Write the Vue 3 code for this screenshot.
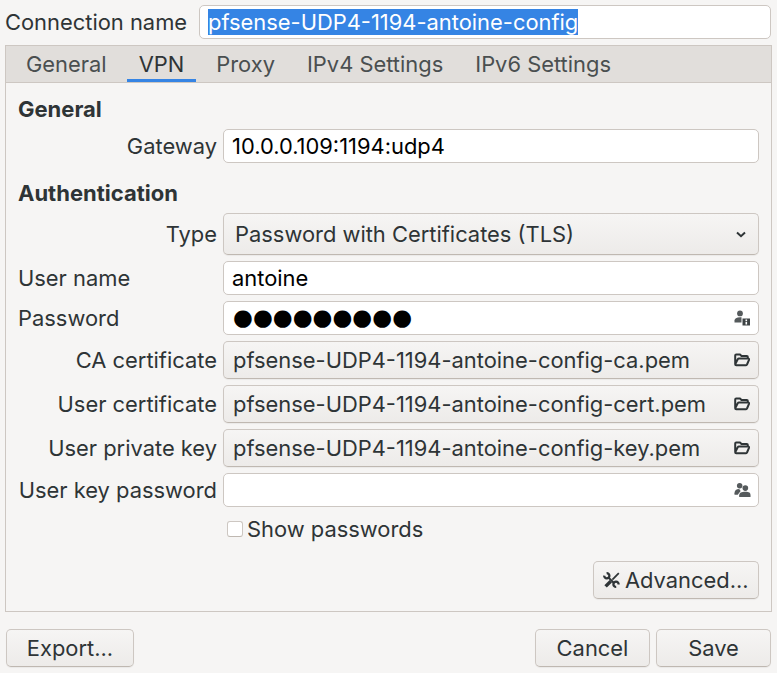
<script setup>
const tabs = [
  { name: 'General' },
  { name: 'VPN', active: true },
  { name: 'Proxy' },
  { name: 'IPv4 Settings' },
  { name: 'IPv6 Settings' },
]
const files = [
  { label: 'CA certificate', file: 'pfsense-UDP4-1194-antoine-config-ca.pem' },
  { label: 'User certificate', file: 'pfsense-UDP4-1194-antoine-config-cert.pem' },
  { label: 'User private key', file: 'pfsense-UDP4-1194-antoine-config-key.pem' },
]
</script>

<template>
  <div class="dialog">
    <div class="name-row">
      <label class="name-label">Connection name</label>
      <div class="entry name-entry"><span class="selected">pfsense-UDP4-1194-antoine-config</span></div>
    </div>

    <div class="notebook">
      <div class="tabs">
        <div v-for="t in tabs" :key="t.name" class="tab" :class="{ active: t.active }">{{ t.name }}</div>
      </div>
      <div class="page">
        <h3 class="heading first">General</h3>
        <div class="row gateway">
          <label class="label">Gateway</label>
          <div class="entry">10.0.0.109:1194:udp4</div>
        </div>

        <h3 class="heading second">Authentication</h3>
        <div class="rows">
          <div class="row">
            <label class="label">Type</label>
            <div class="button combo">
              <span>Password with Certificates (TLS)</span>
              <svg width="16" height="16" viewBox="0 0 16 16" class="chev"><path d="M4 6.5 8 10.2 12 6.5" fill="none" stroke="#2e3436" stroke-width="2"/></svg>
            </div>
          </div>
          <div class="row">
            <label class="label left">User name</label>
            <div class="entry">antoine</div>
          </div>
          <div class="row">
            <label class="label left">Password</label>
            <div class="entry icon-entry">
              <span class="dots">●●●●●●●●●</span>
              <svg width="16" height="16" viewBox="0 0 16 16">
                <circle cx="6" cy="3.4" r="2.9" fill="#555a5c"/>
                <path d="M0.5 12.5V10.5C0.5 8.5 2.5 7.2 6 7.2H7.5V12.5Z" fill="#555a5c"/>
                <path d="M8.5 8.5H16V15.5H8.5Z" fill="#3d4244"/>
                <path d="M11.5 9.6h1.6v1.4h-1.6ZM11.5 11.8h1.6v2.8h-1.6Z" fill="#fff"/>
              </svg>
            </div>
          </div>
          <div v-for="f in files" :key="f.label" class="row">
            <label class="label">{{ f.label }}</label>
            <div class="button file">
              <span>{{ f.file }}</span>
              <svg width="16" height="16" viewBox="0 0 16 16">
                <path d="M1.2 12.3V3.5C1.2 2.9 1.6 2.5 2.2 2.5H6L7.5 4H12.8C13.4 4 13.8 4.4 13.8 5V6.4M1.2 12.3C1.2 12.9 1.7 13.3 2.2 13.3H11.8C12.4 13.3 12.7 13 13 12.5L15 7.8C15.2 7 14.8 6.5 14 6.5H5C4.4 6.5 4 6.8 3.7 7.3Z" fill="none" stroke="#2e3436" stroke-width="2" stroke-linejoin="round"/>
              </svg>
            </div>
          </div>
          <div class="row">
            <label class="label">User key password</label>
            <div class="entry icon-entry">
              <span></span>
              <svg class="people" width="17" height="16" viewBox="0 0 18 16">
                <circle cx="6" cy="3.5" r="2.9" fill="#555a5c"/>
                <path d="M0.5 11.5C0.5 8.5 2.5 7 5.5 7 L7 9 4 13H0.5Z" fill="#555a5c"/>
                <circle cx="12" cy="6" r="3" fill="#555a5c"/>
                <path d="M5.5 15.5V13.5C5.5 11 8 9.8 12 9.8S17.5 11 17.5 13.5V15.5Z" fill="#555a5c"/>
              </svg>
            </div>
          </div>
        </div>

        <div class="check-row">
          <span class="check"></span>
          <span>Show passwords</span>
        </div>

        <div class="advanced-row">
          <div class="button advanced">
            <svg width="17" height="17" viewBox="0 0 17 17" fill="none" stroke="#2e3436">
              <path d="M5.6 5.6 11.2 11.2" stroke-width="2"/>
              <path d="M1.2 3.6A2.6 2.6 0 1 0 3.6 1.2" stroke-width="2.3"/>
              <path d="M13.2 14.9A2.6 2.6 0 1 1 15.6 12.5" stroke-width="2.3"/>
              <path d="M15.8 1.2 9.4 7.6" stroke-width="1.8"/>
              <path d="M7.8 9.2 2.6 14.4" stroke-width="3.4"/>
            </svg>
            <span>Advanced...</span>
          </div>
        </div>
      </div>
    </div>

    <div class="actions">
      <div class="button action export">Export...</div>
      <div class="spacer"></div>
      <div class="button action cancel">Cancel</div>
      <div class="button action save">Save</div>
    </div>
  </div>
</template>

<style>
html, body { margin: 0; background: #f6f5f4; }
</style>

<style scoped>
.dialog {
  width: 777px;
  height: 673px;
  box-sizing: border-box;
  padding: 5px 6px 6px 5px;
  background: #f6f5f4;
  color: #2e3436;
  font-family: Inter, "Noto Sans", sans-serif;
  font-size: 21.9px;
  display: flex;
  flex-direction: column;
  overflow: hidden;
}
.name-row {
  display: flex;
  align-items: center;
  height: 34px;
  gap: 12px;
}
.name-label { width: 182px; flex: none; white-space: nowrap; }
.name-entry { flex: 1; }
.selected { background: #3584e4; color: #fff; display: inline-block; line-height: 26px; }
.entry {
  height: 34px;
  box-sizing: border-box;
  flex: 1;
  min-width: 0;
  background: #fff;
  border: 1px solid #cdc7c2;
  border-radius: 5px;
  padding: 0 8px;
  display: flex;
  align-items: center;
  color: #000;
  white-space: nowrap;
}
.notebook {
  margin-top: 6px;
  margin-right: -1px;
  height: 567px;
  box-sizing: border-box;
  border: 1px solid #cdc7c2;
  display: flex;
  flex-direction: column;
}
.tabs {
  height: 37px;
  box-sizing: border-box;
  flex: none;
  background: #e1dedb;
  border-bottom: 1px solid #cdc7c2;
  display: flex;
  padding-left: 4px;
}
.tab {
  padding: 0 16px;
  line-height: 36px;
  color: #4a4f50;
}
.tab.active { padding: 0 12px; margin: 0 4px; color: #2e3436; box-shadow: inset 0 -3px 0 #3584e4; height: 36px; }
.page {
  flex: 1;
  padding: 0 12px;
  display: flex;
  flex-direction: column;
}
.heading {
  margin: 0;
  font-size: 22px;
  font-weight: 700;
  line-height: 26px;
}
.heading.first { margin-top: 13px; }
.heading.second { margin-top: 17px; }
.gateway { margin-top: 7px; }
.rows {
  margin-top: 7px;
  display: flex;
  flex-direction: column;
  gap: 6px;
}
.row {
  display: flex;
  align-items: center;
  gap: 6px;
}
.label {
  width: 199px;
  flex: none;
  text-align: right;
  white-space: nowrap;
}
.label.left { text-align: left; }
.button {
  box-sizing: border-box;
  border: 1px solid #cdc7c2;
  border-bottom-color: #bfb8b1;
  border-radius: 5px;
  background: linear-gradient(#f6f5f4, #edebe9);
  box-shadow: 0 1px 1px rgba(0, 0, 0, 0.05);
  display: flex;
  align-items: center;
  white-space: nowrap;
}
.combo {
  flex: 1;
  height: 42px;
  padding: 0 9px 0 11px;
  justify-content: space-between;
}
.file {
  flex: 1;
  height: 38px;
  padding: 0 8px 0 9px;
  justify-content: space-between;
}
.icon-entry { justify-content: space-between; }
.icon-entry svg { flex: none; }
.icon-entry .people { margin-right: -1px; }
.dots { font-family: "DejaVu Sans", sans-serif; font-size: 22.8px; margin-top: -2px; margin-left: 1px; }
.check-row {
  margin-top: 9px;
  margin-left: 209px;
  display: flex;
  align-items: center;
  gap: 4px;
  height: 26px;
}
.check {
  width: 16px;
  height: 16px;
  box-sizing: border-box;
  border: 1px solid #cdc7c2;
  border-bottom-color: #bfb8b1;
  border-radius: 3px;
  background: #fff;
}
.advanced-row {
  margin-top: 19px;
  display: flex;
  justify-content: flex-end;
}
.advanced {
  width: 166px;
  height: 38px;
  padding: 0 9px;
  gap: 5px;
}
.actions {
  margin-top: 17px;
  display: flex;
  gap: 6px;
  padding-left: 1px;
}
.action {
  height: 38px;
  justify-content: center;
}
.spacer { flex: 1; }
.export { width: 128px; }
.cancel, .save { width: 115px; }
</style>
